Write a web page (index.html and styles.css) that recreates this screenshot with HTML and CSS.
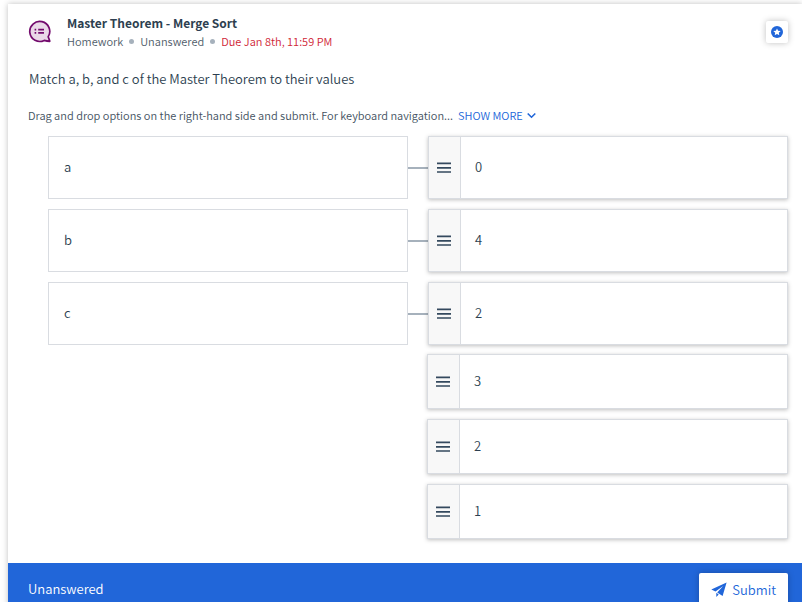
FILE: index.html
```html
<!DOCTYPE html>
<html lang="en">
<head>
<meta charset="utf-8">
<meta name="viewport" content="width=device-width, initial-scale=1">
<title>Master Theorem - Merge Sort</title>
<link rel="stylesheet" href="styles.css">
</head>
<body>
<svg class="sprite" aria-hidden="true">
  <symbol id="grip" viewBox="0 0 14 11">
    <path d="M0 1.4h14M0 5.8h14M0 10h14" fill="none" stroke="#34495e" stroke-width="1.7"/>
  </symbol>
</svg>
<main class="card">
  <header class="head">
    <svg class="type-icon" viewBox="0 0 24 24" aria-hidden="true">
      <path d="M20.2 16.8A10 10 0 1 0 16.2 20.4Q19 21.2 21.8 21.3Q21.2 19 20.2 16.8Z" fill="#ead9e8" stroke="#730b6d" stroke-width="1.7" stroke-linejoin="round"/>
      <path d="M6.6 9.6h1.6M6.6 12.9h1.6M10.2 9.6H16M10.2 12.9H16" fill="none" stroke="#730b6d" stroke-width="1.6"/>
    </svg>
    <div class="titles">
      <h1>Master Theorem - Merge Sort</h1>
      <p class="meta"><span>Homework</span><i class="dot"></i><span>Unanswered</span><i class="dot"></i><span class="due">Due Jan 8th, 11:59 PM</span></p>
    </div>
    <button class="star" type="button" aria-label="Bookmark">
      <svg viewBox="0 0 12 12" aria-hidden="true">
        <circle cx="6" cy="6" r="6" fill="#2166d9"/>
        <path d="M6 2.4l1.1 2.3 2.6.3-1.9 1.7.5 2.6L6 8 3.7 9.3l.5-2.6L2.3 5l2.6-.3z" fill="#fff"/>
      </svg>
    </button>
  </header>
  <p class="question">Match a, b, and c of the Master Theorem to their values</p>
  <p class="hint"><span>Drag and drop options on the right-hand side and submit. For keyboard navigation...</span>
    <button class="more" type="button">SHOW MORE
      <svg viewBox="0 0 9 8" aria-hidden="true"><path d="M.7 2.5L4.5 6.2 8.3 2.5" fill="none" stroke="#2166d9" stroke-width="1.6"/></svg>
    </button>
  </p>
  <section class="board">
    <ul class="pairs">
      <li class="pair"><div class="prompt">a</div><span class="link"></span><div class="option"><span class="handle"><svg><use href="#grip"/></svg></span><span class="value">0</span></div></li>
      <li class="pair"><div class="prompt">b</div><span class="link"></span><div class="option"><span class="handle"><svg><use href="#grip"/></svg></span><span class="value">4</span></div></li>
      <li class="pair"><div class="prompt">c</div><span class="link"></span><div class="option"><span class="handle"><svg><use href="#grip"/></svg></span><span class="value">2</span></div></li>
    </ul>
    <ul class="spares">
      <li class="option"><span class="handle"><svg><use href="#grip"/></svg></span><span class="value">3</span></li>
      <li class="option"><span class="handle"><svg><use href="#grip"/></svg></span><span class="value">2</span></li>
      <li class="option"><span class="handle"><svg><use href="#grip"/></svg></span><span class="value">1</span></li>
    </ul>
  </section>
  <footer class="foot">
    <span>Unanswered</span>
    <button class="submit" type="button">
      <svg viewBox="0 0 16 16" aria-hidden="true">
        <path d="M15.6.6L.3 7.4l4.2 2.2L12.2 4 6.2 10.4l5.4 3.6zM5.3 10.8V15l2.4-2.6z" fill="#2166d9"/>
      </svg>
      Submit
    </button>
  </footer>
</main>
</body>
</html>
```
FILE: styles.css
```css
* { box-sizing: border-box; }

body {
  margin: 0;
  height: 100vh;
  padding: 4px 0 0 8px;
  overflow: hidden;
  background: #fff;
  color: #2d3f50;
  font-family: "Noto Sans CJK SC", "Noto Sans", sans-serif;
  font-size: 13px;
  font-weight: 350;
  line-height: 20px;
}

h1, p, ul { margin: 0; padding: 0; }
ul { list-style: none; }
button { font: inherit; border: 0; padding: 0; cursor: pointer; }
.sprite { display: none; }

.card {
  background: #fff;
  box-shadow: 0 0 6px rgba(0, 0, 0, 0.25);
}

.head {
  display: flex;
  align-items: flex-start;
  padding: 10px 14px 0 20px;
}
.type-icon { width: 24px; height: 24px; margin-top: 6px; }
.titles { flex: 1; padding-left: 15px; }
h1 {
  font-size: 12px;
  font-weight: 700;
  line-height: 18px;
}
.meta {
  display: flex;
  align-items: center;
  font-size: 11px;
  line-height: 18px;
  color: #4f5d6a;
}
.dot {
  width: 5px;
  height: 5px;
  margin: 0 6px;
  border-radius: 50%;
  background: #a6b1bc;
}
.due { color: #d02536; }

.star {
  display: grid;
  place-items: center;
  width: 22px;
  height: 22px;
  margin-top: 7px;
  border-radius: 2px;
  background: #fff;
  box-shadow: 0 0 6px rgba(0, 0, 0, 0.25);
}
.star svg { width: 12px; height: 12px; }

.question { padding: 19px 21px 0; }
.hint {
  display: flex;
  gap: 5px;
  padding: 16px 20px 0;
  font-size: 11px;
  color: #44525f;
}
.more {
  display: flex;
  align-items: center;
  gap: 4px;
  background: none;
  color: #2166d9;
}
.more svg { width: 9px; height: 8px; }

.board { padding: 11px 14px 24px 40px; }
.pairs, .spares { display: grid; gap: 10px; }
.pair {
  display: grid;
  grid-template-columns: 1fr 20px 1fr;
  min-height: 63px;
}
.prompt {
  display: flex;
  align-items: center;
  padding: 0 15px 2px;
  border: 1px solid #d9dce1;
}
.link {
  align-self: center;
  height: 2px;
  background: #a6b1bc;
}
.option {
  display: flex;
  border: 1px solid #d9dce1;
  background: #fff;
  box-shadow: 0 1px 4px rgba(0, 0, 0, 0.25);
}
.handle {
  display: flex;
  align-items: center;
  width: 32px;
  padding-left: 8px;
  border-right: 1px solid #d9dce1;
  background: #f8f8f8;
}
.handle svg { width: 14px; height: 11px; }
.value { align-self: center; padding: 0 14px 2px; }

.spares {
  width: calc(50% - 9px);
  margin: 9px 0 0 auto;
}
.spares .option { min-height: 55px; }

.foot {
  display: flex;
  align-items: flex-start;
  justify-content: space-between;
  padding: 10px 14px 10px 20px;
  background: #2166d9;
  color: #fff;
  line-height: 32px;
}
.submit {
  display: flex;
  align-items: center;
  gap: 5px;
  height: 34px;
  padding: 0 12px;
  border-radius: 2px;
  background: #fff;
  color: #2166d9;
  box-shadow: 0 0 6px rgba(0, 0, 0, 0.25);
}
.submit svg { width: 16px; height: 16px; }
```
